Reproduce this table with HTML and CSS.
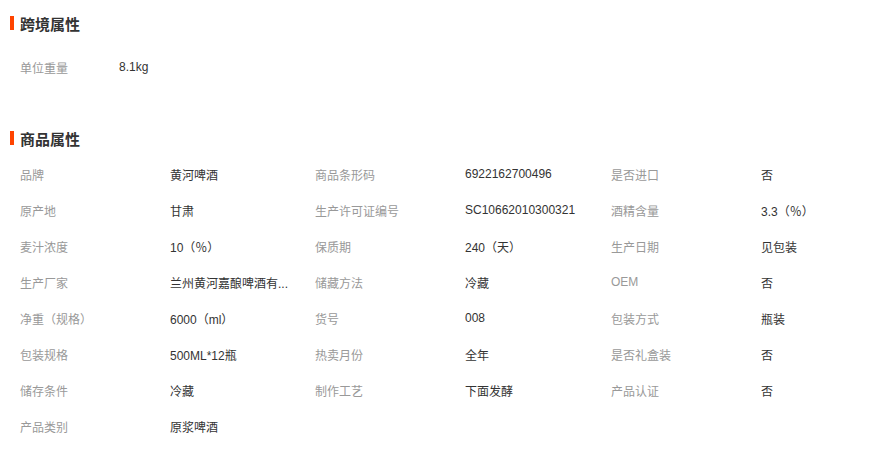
FILE: index.html
```html
<!DOCTYPE html>
<html lang="zh-CN">
<head>
    <meta charset="UTF-8">
    <meta name="viewport" content="width=device-width, initial-scale=1.0">
    <title>商品属性</title>
    <link rel="stylesheet" href="styles.css">
</head>
<body>

    <main>

        <section class="attrs cross">
            <h3 class="heading">跨境属性</h3>
            <div class="grid single">
                <span class="label">单位重量</span>
                <span class="value">8.1kg</span>
            </div>
        </section>

        <section class="attrs goods">
            <h3 class="heading">商品属性</h3>
            <div class="grid">
                <span class="label">品牌</span><span class="value">黄河啤酒</span>
                <span class="label">商品条形码</span><span class="value">6922162700496</span>
                <span class="label">是否进口</span><span class="value">否</span>

                <span class="label">原产地</span><span class="value">甘肃</span>
                <span class="label">生产许可证编号</span><span class="value">SC10662010300321</span>
                <span class="label">酒精含量</span><span class="value">3.3（％）</span>

                <span class="label">麦汁浓度</span><span class="value">10（％）</span>
                <span class="label">保质期</span><span class="value">240（天）</span>
                <span class="label">生产日期</span><span class="value">见包装</span>

                <span class="label">生产厂家</span><span class="value" title="兰州黄河嘉酿啤酒有限公司">兰州黄河嘉酿啤酒有...</span>
                <span class="label">储藏方法</span><span class="value">冷藏</span>
                <span class="label">OEM</span><span class="value">否</span>

                <span class="label">净重（规格）</span><span class="value">6000（ml）</span>
                <span class="label">货号</span><span class="value">008</span>
                <span class="label">包装方式</span><span class="value">瓶装</span>

                <span class="label">包装规格</span><span class="value">500ML*12瓶</span>
                <span class="label">热卖月份</span><span class="value">全年</span>
                <span class="label">是否礼盒装</span><span class="value">否</span>

                <span class="label">储存条件</span><span class="value">冷藏</span>
                <span class="label">制作工艺</span><span class="value">下面发酵</span>
                <span class="label">产品认证</span><span class="value">否</span>

                <span class="label">产品类别</span><span class="value">原浆啤酒</span>
            </div>
        </section>

    </main>

</body>
</html>
```

FILE: styles.css
```css
body {
    margin: 0;
    font-family: "Liberation Sans", "Noto Sans CJK SC", sans-serif;
    font-size: 12px;
    color: #333;
    background: #fff;
}

main {
    padding: 0 10px;
}

.heading {
    display: flex;
    align-items: center;
    margin: 0;
    height: 20px;
    font-size: 15px;
    font-weight: bold;
    color: #333;
}

.heading::before {
    content: "";
    display: inline-block;
    width: 4px;
    height: 14px;
    margin-right: 6px;
    background-color: #ff4400;
}

.cross {
    padding-top: 13px;
}

.cross .grid {
    margin-top: 16px;
}

.goods {
    margin-top: 43px;
}

.goods .grid {
    margin-top: 8px;
}

.grid {
    display: grid;
    grid-template-columns: 150px 145px 150px 146px 150px 1fr;
    grid-auto-rows: 36px;
    align-items: center;
    padding-left: 10px;
}

.grid.single {
    grid-template-columns: 99px 1fr;
}

.label {
    color: #999;
    white-space: nowrap;
}

.value {
    color: #333;
    white-space: nowrap;
}
```
